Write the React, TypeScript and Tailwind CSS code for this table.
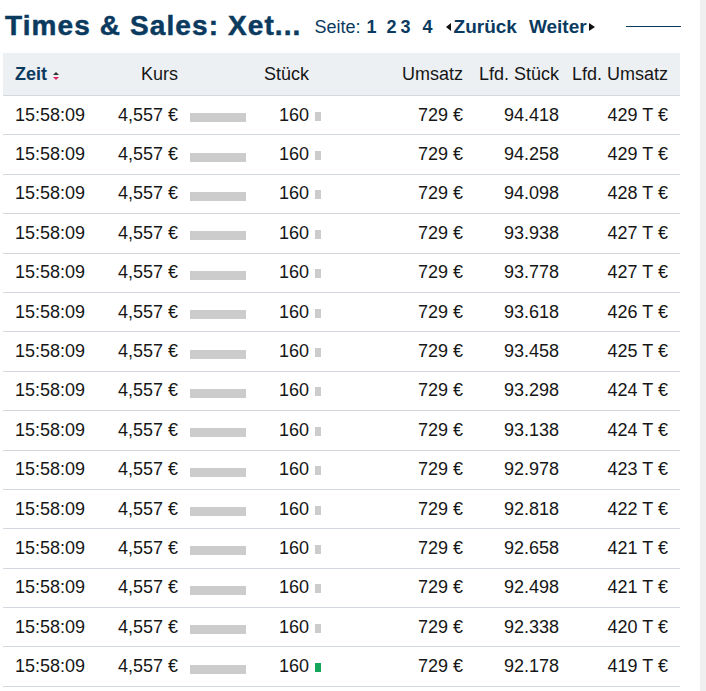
const rows = [
  ['94.418', '429'],
  ['94.258', '429'],
  ['94.098', '428'],
  ['93.938', '427'],
  ['93.778', '427'],
  ['93.618', '426'],
  ['93.458', '425'],
  ['93.298', '424'],
  ['93.138', '424'],
  ['92.978', '423'],
  ['92.818', '422'],
  ['92.658', '421'],
  ['92.498', '421'],
  ['92.338', '420'],
  ['92.178', '419'],
];

function SortIcon() {
  return (
    <svg width="8" height="12" viewBox="0 0 8 12" className="ml-[5px] mt-[4px]">
      <path d="M1 5 L4 2 L7 5 Z" fill="#333" />
      <path d="M1 7 L4 10 L7 7 Z" fill="#e0245e" />
    </svg>
  );
}

export default function App() {
  return (
    <div className="flex w-[706px] h-[691px] overflow-hidden bg-white font-['Liberation_Sans',Arial,sans-serif]">
      <div className="w-[700px] pl-[3px]">
        <div className="flex items-end h-[53px] pb-[13px]">
          <h1 className="ml-[2px] text-[28px] leading-none font-bold tracking-[1.1px] text-[#0b3a5f] [-webkit-text-stroke:0.5px_#0b3a5f]">
            Times &amp; Sales: Xet...
          </h1>
          <div className="flex items-center ml-[13px] mb-[4px] text-[18px] leading-none text-[#0b3a5f]">
            <span>Seite:</span>
            <span className="ml-[6px] font-bold">1</span>
            <span className="ml-[10px] font-bold">2</span>
            <span className="ml-[4px] font-bold">3</span>
            <span className="ml-[12px] font-bold">4</span>
            <span className="ml-[13px] flex items-center font-bold text-[19px]">
              <svg width="6" height="8" viewBox="0 0 6 8" className="mr-[2px]">
                <path d="M5 0 L0 4 L5 8 Z" fill="#111" />
              </svg>
              Zurück
            </span>
            <span className="ml-[12px] flex items-center font-bold text-[19px]">
              Weiter
              <svg width="8" height="8" viewBox="0 0 8 8" className="ml-[1px]">
                <path d="M1 0 L7 4 L1 8 Z" fill="#111" />
              </svg>
            </span>
            <span className="ml-[30px] w-[55px] h-px bg-[#0b3a5f]" />
          </div>
        </div>

        <div className="w-[677px] text-[18px] text-[#161616]">
          <div className="flex items-center h-[43px] bg-[#edf0f3] border-b border-[#d3d9df]">
            <div className="w-[100px] pl-3 flex items-center font-bold text-[#0b3a5f]">
              Zeit
              <SortIcon />
            </div>
            <div className="w-[75px] text-right">Kurs</div>
            <div className="w-[131px] text-right">Stück</div>
            <div className="w-[154px] text-right">Umsatz</div>
            <div className="w-[96px] text-right">Lfd. Stück</div>
            <div className="w-[109px] text-right">Lfd. Umsatz</div>
          </div>

          {rows.map(([lfd, umsatz], i) => (
            <div key={i} className="flex items-center h-[39.4px] border-b border-[#d3d9df]">
              <div className="w-[100px] pl-3">15:58:09</div>
              <div className="w-[75px] text-right">4,557 €</div>
              <div className="w-[68px] pl-3 pt-[5px]">
                <div className="w-[56px] h-[9px] bg-[#cccccc]" />
              </div>
              <div className="w-[63px] text-right">160</div>
              <div className="w-[12px] pl-[6px] pt-[2px]">
                <div className={i === rows.length - 1 ? 'w-[6px] h-[9px] bg-[#13a55a]' : 'w-[6px] h-[9px] bg-[#cccccc]'} />
              </div>
              <div className="w-[142px] text-right">729 €</div>
              <div className="w-[96px] text-right">{lfd}</div>
              <div className="w-[109px] text-right">{umsatz} T €</div>
            </div>
          ))}
        </div>
      </div>
      <div className="w-[6px] h-full bg-[#f0f0f0]" />
    </div>
  );
}
